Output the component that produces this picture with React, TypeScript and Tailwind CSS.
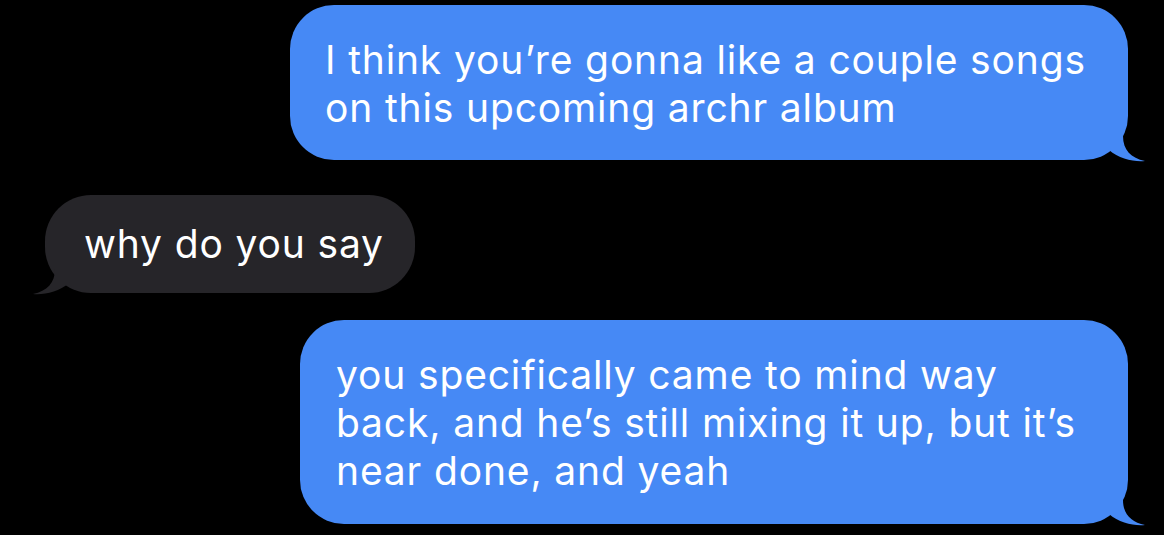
import React from "react";

function TailRight({ color }: { color: string }) {
  return (
    <svg
      className="absolute right-[-18px] bottom-[-2px]"
      width="42"
      height="38"
      viewBox="0 0 42 38"
    >
      <path d="M19 0 L19 12 C19 26 27 34 41 37 C30 38 15 35 5 26 L0 22 L0 0 Z" fill={color} />
    </svg>
  );
}

function TailLeft({ color }: { color: string }) {
  return (
    <svg
      className="absolute left-[-13px] bottom-[-2px]"
      width="42"
      height="38"
      viewBox="0 0 42 38"
    >
      <path d="M23 0 L23 12 C23 26 15 34 1 37 C12 38 27 35 37 26 L42 22 L42 0 Z" fill={color} />
    </svg>
  );
}

export default function App() {
  const blue = "#4689f5";
  const gray = "#262529";
  return (
    <div
      className="w-[1164px] h-[535px] bg-black overflow-hidden flex flex-col text-white text-[39px] leading-[48px] tracking-[0.85px]"
      style={{ fontFamily: "Inter, 'Noto Sans', sans-serif" }}
    >
      <div className="flex justify-end pr-[36px] pt-[5px]">
        <div className="relative w-[838px] h-[155px] rounded-[44px] bg-[#4689f5] pl-[35px] pt-[31px] whitespace-nowrap">
          <div>I think you’re gonna like a couple songs</div>
          <div>on this upcoming archr album</div>
          <TailRight color={blue} />
        </div>
      </div>

      <div className="flex pl-[45px] pt-[35px]">
        <div className="relative w-[370px] h-[98px] rounded-[46px] bg-[#262529] pl-[39px] pt-[25px] whitespace-nowrap">
          <div>why do you say</div>
          <TailLeft color={gray} />
        </div>
      </div>

      <div className="flex justify-end pr-[36px] pt-[27px]">
        <div className="relative w-[828px] h-[204px] rounded-[44px] bg-[#4689f5] pl-[36px] pt-[31px] whitespace-nowrap">
          <div>you specifically came to mind way</div>
          <div>back, and he’s still mixing it up, but it’s</div>
          <div>near done, and yeah</div>
          <TailRight color={blue} />
        </div>
      </div>
    </div>
  );
}
